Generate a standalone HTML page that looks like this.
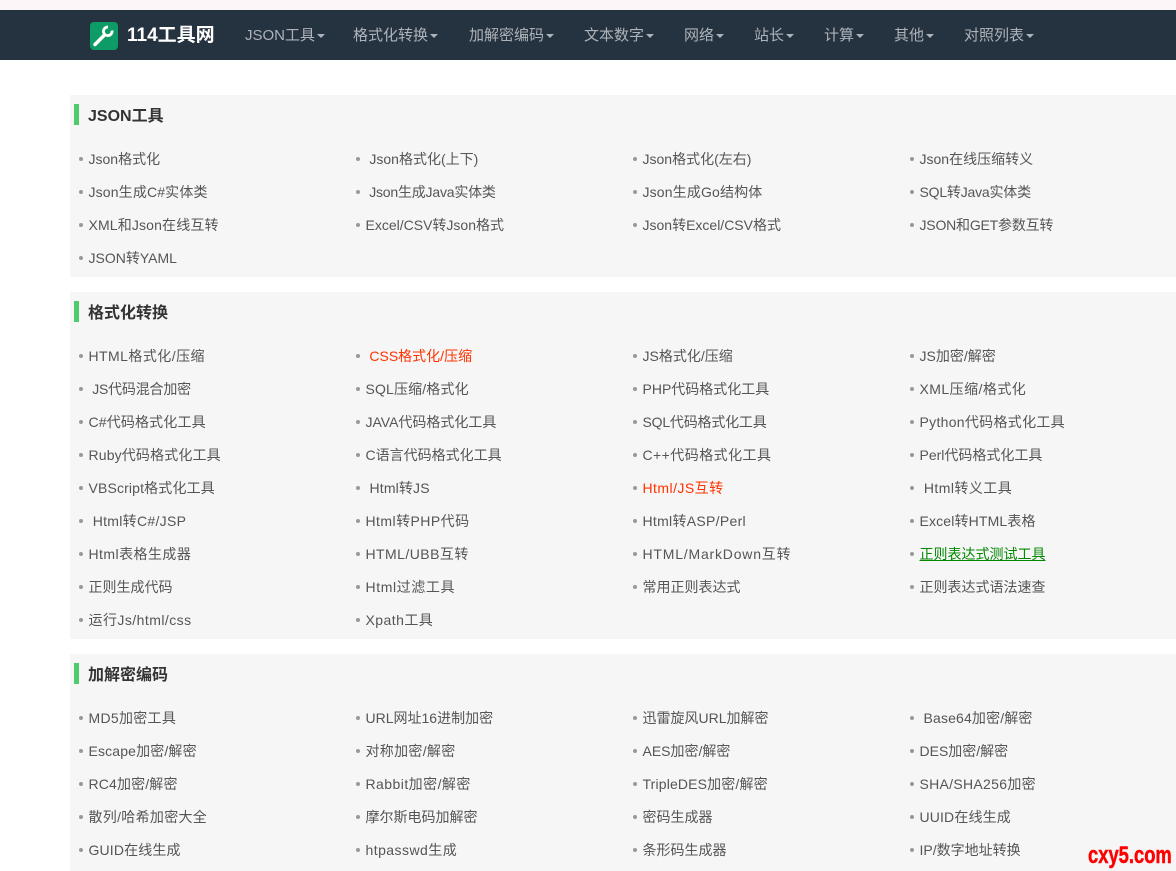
<!DOCTYPE html>
<html lang="zh">
<head>
<meta charset="utf-8">
<title>114工具网</title>
<style>
*{box-sizing:border-box}
html,body{margin:0;padding:0}
body{width:1176px;height:871px;overflow:hidden;position:relative;background:#fff;font-family:"Liberation Sans","Noto Sans CJK SC",sans-serif;font-size:14px;color:#555}
.top{position:absolute;left:0;top:0;width:1176px;height:10px;background:#fdf6f8}
nav{position:absolute;left:0;top:10px;width:1176px;height:50px;background:#253240}
.logo{position:absolute;left:90px;top:12px;width:28px;height:28px;border-radius:4px;background:#0e9c66}
.brand{position:absolute;left:127px;top:1px;line-height:50px;font-size:19px;font-weight:bold;color:#fff}
nav a{position:absolute;top:1px;line-height:50px;font-size:15px;color:#aeb3b9;white-space:nowrap}
nav a::after{content:"";display:inline-block;margin-left:2px;vertical-align:2px;border-top:4px solid #aeb3b9;border-left:4px solid transparent;border-right:4px solid transparent}
section{position:absolute;left:70px;width:1106px;background:#f6f6f6}
section h2{position:absolute;left:18px;top:10px;margin:0;font-size:16px;line-height:23px;color:#333;font-weight:bold}
section h2::before{content:"";position:absolute;left:-14px;top:-1px;width:5px;height:21px;background:#4fcb6e}
ul{position:absolute;left:18.5px;top:48px;margin:0;padding:0;list-style:none;width:1108px}
li{float:left;width:277px;height:33px;line-height:33px;position:relative;white-space:nowrap}
li::before{content:"";position:absolute;left:-9.5px;top:13.5px;width:4px;height:4px;border-radius:50%;background:#999}
.r{color:#f30}
.g{color:#080;text-decoration:underline}
.a{letter-spacing:.15px}
.b{letter-spacing:.3px}
.c{letter-spacing:.45px}
.d{letter-spacing:.6px}
.e{letter-spacing:.8px}
.n{letter-spacing:-.2px}
.mark{position:absolute;left:1088px;top:843px;font-size:24.5px;line-height:26px;font-weight:bold;color:#f00;-webkit-text-stroke:.5px #f00;transform:scaleX(.75);transform-origin:0 0;white-space:nowrap}
</style>
</head>
<body>
<div class="top"></div>
<nav>
<div class="logo"><svg width="28" height="28" viewBox="0 0 28 28"><path d="M5 22.5 14.500 13" stroke="#fff" stroke-width="3.500" fill="none" stroke-linecap="round"/><path d="M22 8.500A4.300 4.300 0 1 1 18 5" stroke="#fff" stroke-width="2.800" fill="none"/></svg></div>
<div class="brand">114工具网</div>
<a style="left:245px">JSON工具</a>
<a style="left:353px">格式化转换</a>
<a style="left:469px">加解密编码</a>
<a style="left:584px">文本数字</a>
<a style="left:684px">网络</a>
<a style="left:754px">站长</a>
<a style="left:824px">计算</a>
<a style="left:894px">其他</a>
<a style="left:964px">对照列表</a>
</nav>

<section style="top:95px;height:182px">
<h2>JSON工具</h2>
<ul>
<li>Json格式化</li><li>&nbsp;Json格式化(上下)</li><li>Json格式化(左右)</li><li>Json在线压缩转义</li>
<li class="a">Json生成C#实体类</li><li class="n">&nbsp;Json生成Java实体类</li><li class="a">Json生成Go结构体</li><li class="n">SQL转Java实体类</li>
<li class="a">XML和Json在线互转</li><li>Excel/CSV转Json格式</li><li>Json转Excel/CSV格式</li><li class="n">JSON和GET参数互转</li>
<li>JSON转YAML</li>
</ul>
</section>

<section style="top:292px;height:347px">
<h2>格式化转换</h2>
<ul>
<li class="c">HTML格式化/压缩</li><li class="r">&nbsp;CSS格式化/压缩</li><li>JS格式化/压缩</li><li>JS加密/解密</li>
<li class="n">&nbsp;JS代码混合加密</li><li class="a">SQL压缩/格式化</li><li>PHP代码格式化工具</li><li class="c">XML压缩/格式化</li>
<li class="a">C#代码格式化工具</li><li>JAVA代码格式化工具</li><li class="n">SQL代码格式化工具</li><li class="b">Python代码格式化工具</li>
<li class="a">Ruby代码格式化工具</li><li>C语言代码格式化工具</li><li class="c">C++代码格式化工具</li><li>Perl代码格式化工具</li>
<li class="a">VBScript格式化工具</li><li class="a">&nbsp;Html转JS</li><li class="r c">Html/JS互转</li><li class="c">&nbsp;Html转义工具</li>
<li class="b">&nbsp;Html转C#/JSP</li><li class="c">Html转PHP代码</li><li class="b">Html转ASP/Perl</li><li class="a">Excel转HTML表格</li>
<li class="c">Html表格生成器</li><li class="c">HTML/UBB互转</li><li class="e">HTML/MarkDown互转</li><li><span class="g">正则表达式测试工具</span></li>
<li>正则生成代码</li><li class="d">Html过滤工具</li><li>常用正则表达式</li><li>正则表达式语法速查</li>
<li class="c">运行Js/html/css</li><li class="c">Xpath工具</li>
</ul>
</section>

<section style="top:654px;height:217px">
<h2>加解密编码</h2>
<ul>
<li class="b">MD5加密工具</li><li>URL网址16进制加密</li><li>迅雷旋风URL加解密</li><li class="a">&nbsp;Base64加密/解密</li>
<li class="a">Escape加密/解密</li><li class="b">对称加密/解密</li><li>AES加密/解密</li><li>DES加密/解密</li>
<li class="a">RC4加密/解密</li><li class="c">Rabbit加密/解密</li><li class="a">TripleDES加密/解密</li><li class="b">SHA/SHA256加密</li>
<li class="b">散列/哈希加密大全</li><li>摩尔斯电码加解密</li><li>密码生成器</li><li class="a">UUID在线生成</li>
<li class="a">GUID在线生成</li><li class="c">htpasswd生成</li><li>条形码生成器</li><li>IP/数字地址转换</li>
</ul>
</section>
<div class="mark">cxy5.com</div>
</body>
</html>
